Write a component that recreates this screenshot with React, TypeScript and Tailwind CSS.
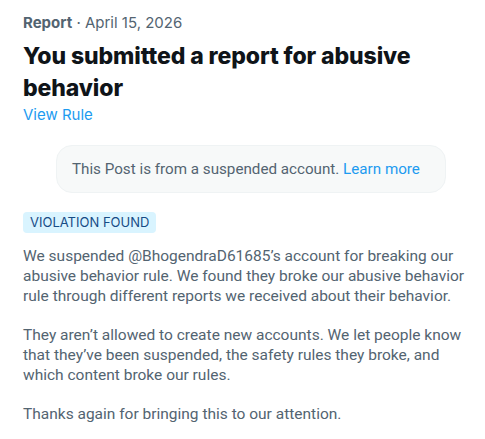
export default function App() {
  return (
    <div className="w-[485px] h-[439px] bg-white font-['Inter','Noto_Sans',sans-serif] text-[#536471] pl-[23px] pr-[14px] pt-[13px] overflow-hidden">
      <div className="text-[15px] leading-5">
        <span className="font-bold">Report</span>
        <span> · April 15, 2026</span>
      </div>
      <h1 className="mt-[7px] text-[23px] leading-[32px] font-extrabold text-[#0f1419] tracking-[-0.1px]">
        You submitted a report for abusive behavior
      </h1>
      <a className="block mt-[1px] text-[15px] leading-5 text-[#1d9bf0]">View Rule</a>
      <div className="mt-[20px] ml-[33px] w-[390px] h-[48px] flex items-center pl-[15px] rounded-2xl bg-[#f7f9f9] border border-[#eff3f4] font-['Roboto',sans-serif] text-[15.2px]">
        <span>
          This Post is from a suspended account. <span className="text-[#1d9bf0]">Learn more</span>
        </span>
      </div>
      <div className="mt-[19px] inline-block rounded bg-[#d9f4ff] px-[7px] h-[21px] leading-[21px] text-[13px] text-[#174c86]">
        VIOLATION FOUND
      </div>
      <div className="mt-[13px] font-['Roboto',sans-serif] text-[15.5px] leading-5 flex flex-col gap-[19px]">
        <p>
          We suspended @BhogendraD61685’s account for breaking our abusive behavior rule. We found they broke our abusive behavior rule through different reports we received about their behavior.
        </p>
        <p>
          They aren’t allowed to create new accounts. We let people know that they’ve been suspended, the safety rules they broke, and which content broke our rules.
        </p>
        <p>Thanks again for bringing this to our attention.</p>
      </div>
    </div>
  );
}
